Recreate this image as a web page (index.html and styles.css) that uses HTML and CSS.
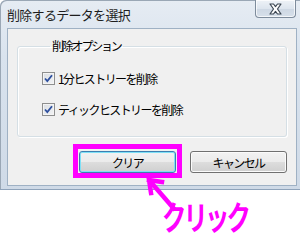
FILE: index.html
```html
<!DOCTYPE html>
<html lang="ja">
<head>
<meta charset="utf-8">
<link rel="stylesheet" href="styles.css">
</head>
<body>
<div class="window">
  <div class="titlebar">
    <span class="title">削除するデータを選択</span>
    <span class="close">
      <svg width="17" height="12" viewBox="0 0 17 12"><path d="M3 1 L6.5 1 L8.5 3.6 L10.5 1 L14 1 L10.5 6 L14 11 L10.5 11 L8.5 8.4 L6.5 11 L3 11 L6.5 6 Z" fill="#fff" stroke="#3b4652" stroke-width="1.2" stroke-linejoin="round"/></svg>
    </span>
  </div>
  <div class="client">
    <fieldset class="group">
      <legend>削除オプション</legend>
      <label class="row"><span class="check"><svg width="11" height="11" viewBox="0 0 11 11"><path d="M2 5.5 L4.3 8 L9 2.2" fill="none" stroke="#2d4f9e" stroke-width="1.8"/></svg></span>1分ヒストリーを削除</label>
      <label class="row second"><span class="check"><svg width="11" height="11" viewBox="0 0 11 11"><path d="M2 5.5 L4.3 8 L9 2.2" fill="none" stroke="#2d4f9e" stroke-width="1.8"/></svg></span>ティックヒストリーを削除</label>
    </fieldset>
    <div class="buttons">
      <span class="btn default">クリア</span>
      <span class="btn">キャンセル</span>
    </div>
  </div>
</div>
<div class="caption"><span class="caption-text">クリック</span></div>
<div class="highlight"></div>
<svg class="arrow" width="40" height="40" viewBox="0 0 40 40">
  <path d="M3 3 L29 33" stroke="#ff00ff" stroke-width="4.5" fill="none"/>
  <path d="M3 3 L16 5 M3 3 L5 16" stroke="#ff00ff" stroke-width="4.5" fill="none" stroke-linecap="square"/>
</svg>
</body>
</html>
```
FILE: styles.css
```css
html, body {
  margin: 0;
  padding: 0;
  background: #fff;
}
body {
  position: relative;
  width: 300px;
  font-family: "Noto Sans CJK JP", "Noto Sans", sans-serif;
}
.window {
  width: 300px;
  height: 190px;
  box-sizing: border-box;
  padding: 0 3px 3px 7px;
  display: flex;
  flex-direction: column;
  background: linear-gradient(180deg, #e6ecf3 0%, #d9e3ee 30%, #cfdae7 100%);
  border-top-left-radius: 6px;
  box-shadow: inset 1px 1px 0 #9aa7b5;
  border-bottom: 1px solid #8fa3ba;
}
.titlebar {
  height: 28px;
  display: flex;
  justify-content: space-between;
  align-items: flex-start;
  flex: none;
}
.title {
  font-size: 13px;
  line-height: 16px;
  letter-spacing: -0.7px;
  padding-top: 7px;
  color: #1e1e1e;
}
.close {
  width: 41px;
  height: 18px;
  margin-right: 1px;
  box-sizing: border-box;
  border: 1px solid #7e8c9c;
  border-top: none;
  border-radius: 0 0 4px 4px;
  background: linear-gradient(180deg, #eef2f7 0%, #dde5ee 50%, #cdd7e3 51%, #d7e0ea 100%);
  box-shadow: inset 0 0 0 1px rgba(255,255,255,0.7);
  display: flex;
  align-items: center;
  justify-content: center;
}
.client {
  flex: 1;
  background: #f0f0f0;
  border: 1px solid #9fb1c4;
  padding: 10px 9px 0 9px;
}
.group {
  margin: 0;
  padding: 18px 0 20px 24px;
  border: 1px solid #d5dfe5;
  border-radius: 3px;
  box-shadow: inset 1px 1px 0 #fff, 1px 1px 0 #fff;
  font-size: 12px;
  color: #000;
}
.group legend {
  margin-left: 8px;
  padding: 0 2px;
  font-size: 12px;
  line-height: 14px;
  letter-spacing: -2.2px;
}
.row {
  display: flex;
  align-items: center;
  height: 14px;
  font-size: 12px;
  letter-spacing: -1.6px;
}
.row.second {
  margin-top: 17px;
}
.check {
  width: 13px;
  height: 13px;
  box-sizing: border-box;
  border: 1px solid #8e8f8f;
  background: linear-gradient(135deg, #dadee3 0%, #f2f3f5 100%);
  box-shadow: inset 0 0 0 1px #f4f4f4;
  margin-right: 3px;
  display: flex;
  align-items: center;
  justify-content: center;
  flex: none;
}
.buttons {
  display: flex;
  justify-content: flex-end;
  gap: 14px;
  margin-top: 14px;
}
.btn {
  width: 97px;
  height: 22px;
  box-sizing: border-box;
  border: 1px solid #707070;
  border-radius: 3px;
  background: linear-gradient(180deg, #f2f2f2 0%, #ebebeb 50%, #dddddd 51%, #cfcfcf 100%);
  box-shadow: inset 0 0 0 1px #fbfbfb;
  font-size: 12px;
  letter-spacing: -1.6px;
  color: #000;
  display: flex;
  align-items: center;
  justify-content: center;
}
.btn.default {
  border-color: #3c7fb1;
  box-shadow: inset 0 0 0 1px #7fe0f6;
}
.caption {
  display: flex;
  margin: 2px 0 0 162px;
}
.caption-text {
  font-size: 33px;
  line-height: 48px;
  font-weight: 700;
  color: #ff00ff;
  letter-spacing: -4px;
  transform: scaleX(0.74);
  transform-origin: left center;
  white-space: nowrap;
}
.highlight {
  position: absolute;
  left: 73px;
  top: 144px;
  width: 109px;
  height: 34px;
  box-sizing: border-box;
  border: 5px solid #ff00ff;
}
.arrow {
  position: absolute;
  left: 146px;
  top: 177px;
}
```
